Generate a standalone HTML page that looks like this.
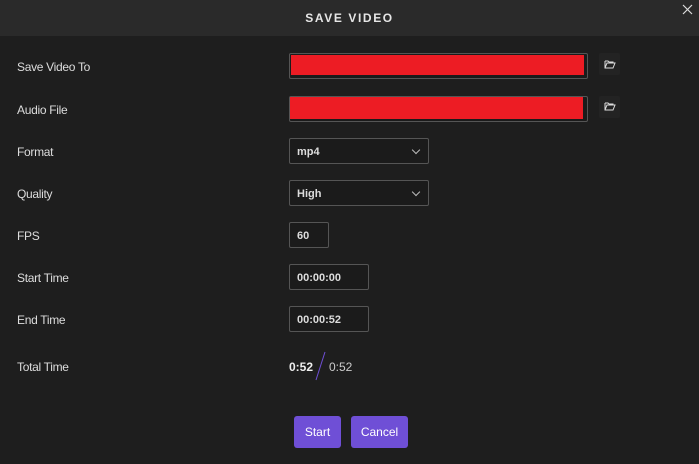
<!DOCTYPE html>
<html><head><style>
*{margin:0;padding:0;box-sizing:border-box}
body{width:699px;height:464px;background:#1e1e1e;font-family:"Liberation Sans",sans-serif;color:#ddd;position:relative;overflow:hidden}
.hdr{position:absolute;left:0;top:0;width:699px;height:36px;background:#2a2a2a}
.title{position:absolute;top:11px;left:0;width:699px;text-align:center;font-size:12px;font-weight:bold;letter-spacing:1.6px;color:#e6e6e6}
.x{position:absolute;left:682px;top:4px}
.lbl{position:absolute;left:17px;font-size:12px;color:#ddd;letter-spacing:-0.3px}
.box{position:absolute;border:1px solid #555;border-radius:2px;background:#1b1b1b;font-size:11px;font-weight:bold;color:#ddd;padding-left:7px;padding-top:1px;line-height:24px}
.red{position:absolute;background:#ed1c24}
.fb{position:absolute;width:21px;height:22px;background:#232323;border-radius:2px}
.chev{position:absolute;right:9px;top:8px;width:6px;height:6px;border-right:1px solid #bbb;border-bottom:1px solid #bbb;transform:rotate(45deg)}
.btn{position:absolute;top:416px;height:32px;background:#6f4fd6;border-radius:3px;color:#fff;font-size:12px;text-align:center;line-height:32px}
</style></head><body>
<div class="hdr"></div>
<div class="title">SAVE VIDEO</div>
<svg class="x" width="11" height="11"><path d="M1 1L10 10M10 1L1 10" stroke="#ddd" stroke-width="1.2"/></svg>
<div class="lbl" style="top:60px">Save Video To</div>
<div class="lbl" style="top:103px">Audio File</div>
<div class="lbl" style="top:145px">Format</div>
<div class="lbl" style="top:187px">Quality</div>
<div class="lbl" style="top:229px">FPS</div>
<div class="lbl" style="top:271px">Start Time</div>
<div class="lbl" style="top:313px">End Time</div>
<div class="lbl" style="top:360px">Total Time</div>

<div class="box" style="left:289px;top:53px;width:299px;height:26px"></div>
<div class="red" style="left:291px;top:55px;width:293px;height:20px"></div>
<div class="box" style="left:289px;top:96px;width:299px;height:26px"></div>
<div class="red" style="left:290px;top:97px;width:293px;height:22px"></div>
<div class="fb" style="left:599px;top:53px"><svg width="21" height="22"><path d="M6 8h3l1 1h4v1M6 8v7h8l2-5H8l-2 5" fill="none" stroke="#ddd" stroke-width="1"/></svg></div>
<div class="fb" style="left:599px;top:96px"><svg width="21" height="22"><path d="M6 7h3l1 1h4v1M6 7v7h8l2-5H8l-2 5" fill="none" stroke="#ddd" stroke-width="1"/></svg></div>

<div class="box" style="left:289px;top:138px;width:140px;height:26px">mp4<div class="chev"></div></div>
<div class="box" style="left:289px;top:180px;width:140px;height:26px">High<div class="chev"></div></div>
<div class="box" style="left:289px;top:222px;width:40px;height:26px">60</div>
<div class="box" style="left:289px;top:264px;width:80px;height:26px">00:00:00</div>
<div class="box" style="left:289px;top:306px;width:80px;height:26px">00:00:52</div>

<div style="position:absolute;left:289px;top:360px;font-size:12px;font-weight:bold;color:#eee">0:52</div>
<svg style="position:absolute;left:314px;top:350px" width="14" height="32"><line x1="2" y1="30" x2="11" y2="2" stroke="#6f4fd6" stroke-width="1"/></svg>
<div style="position:absolute;left:329px;top:360px;font-size:12px;color:#ccc">0:52</div>

<div class="btn" style="left:294px;width:47px">Start</div>
<div class="btn" style="left:351px;width:57px">Cancel</div>
</body></html>
